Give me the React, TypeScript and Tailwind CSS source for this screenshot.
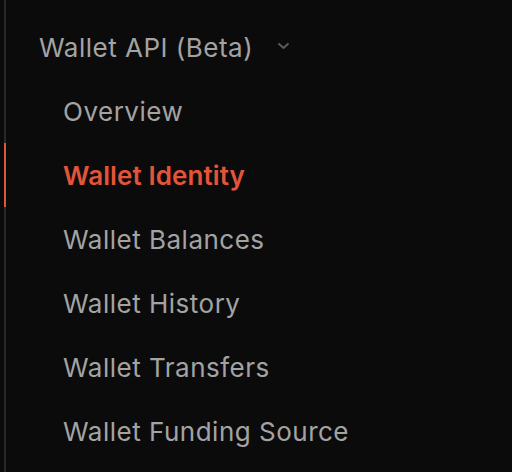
import React from "react";

const items = [
  "Overview",
  "Wallet Identity",
  "Wallet Balances",
  "Wallet History",
  "Wallet Transfers",
  "Wallet Funding Source",
];

export default function App() {
  return (
    <div
      className="w-[512px] h-[472px] bg-[#0c0b0c] overflow-hidden pl-1"
      style={{ fontFamily: "Inter, 'Noto Sans', sans-serif" }}
    >
      <div className="h-full border-l-2 border-[#29282a] flex flex-col pt-[15px]">
        <div className="h-[64px] shrink-0 flex items-center pl-[33px] gap-[24px]">
          <span className="text-[26px] text-[#a3a3a3] tracking-[0.5px]">Wallet API (Beta)</span>
          <svg width="13" height="8" viewBox="0 0 13 8" className="mt-[-2px]">
            <path d="M1.5 1.5 L6.5 6 L11.5 1.5" fill="none" stroke="#5c5b5d" strokeWidth="2" />
          </svg>
        </div>
        {items.map((it, i) => (
          <div
            key={it}
            className={
              "h-[64px] shrink-0 flex items-center pl-[57px] -ml-[2px] border-l-2 " +
              (i === 1 ? "border-[#e2553a]" : "border-transparent")
            }
          >
            <span
              className={
                "text-[26px] " +
                (i === 1
                  ? "text-[#e2553a] font-semibold tracking-[0.1px]"
                  : "text-[#a3a3a3] tracking-[0.5px]")
              }
            >
              {it}
            </span>
          </div>
        ))}
      </div>
    </div>
  );
}
